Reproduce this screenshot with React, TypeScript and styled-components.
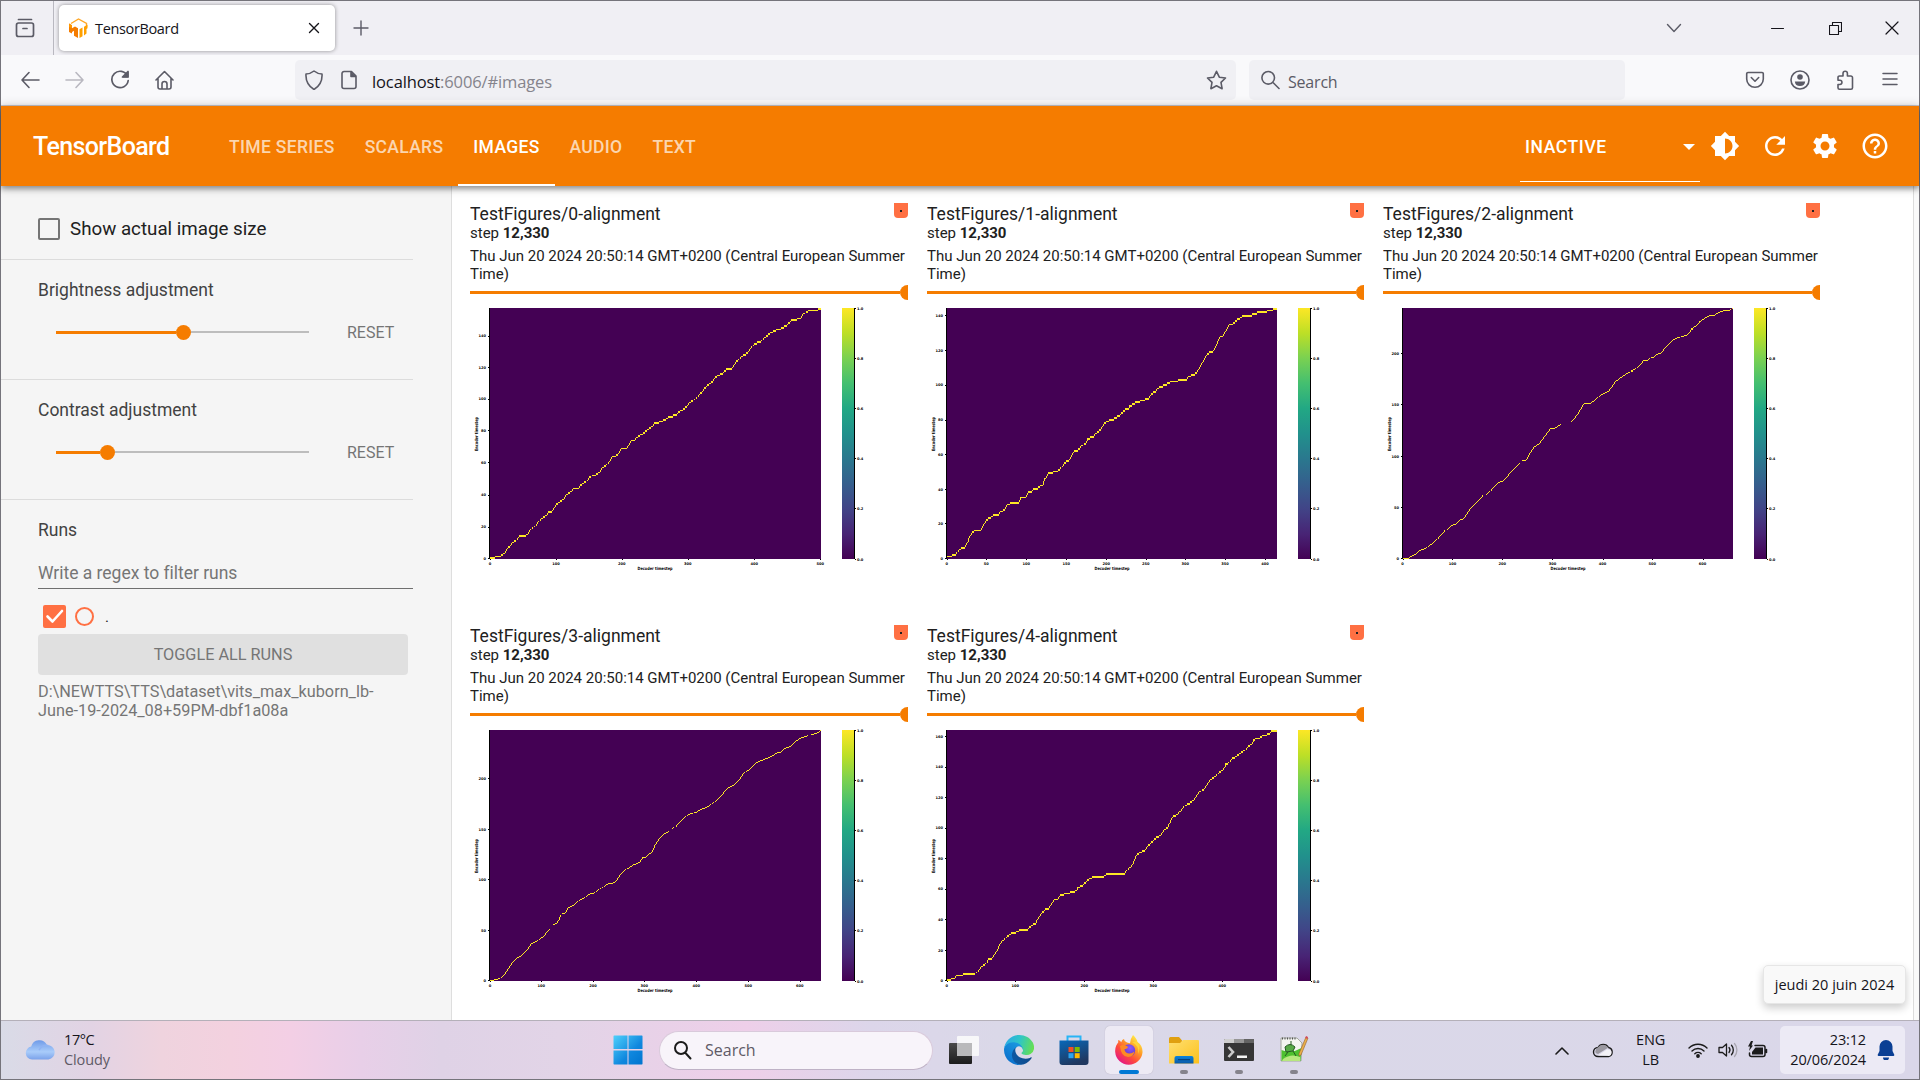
import React from 'react';
import styled, { createGlobalStyle } from 'styled-components';
import { MdBrightness6, MdHelpOutline, MdRefresh, MdSettings } from 'react-icons/md';

const ORANGE = '#f57c00';
const SYSTEM = '"Open Sans", "Noto Sans", sans-serif';

const GlobalStyle = createGlobalStyle`
  * { box-sizing: border-box; }
  body { margin: 0; background: #fff; overflow: hidden; font-family: Roboto, "Liberation Sans", sans-serif; }
  svg { display: block; flex: none; }
`;

const Window = styled.div`
  width: 1920px;
  height: 1080px;
  border: 1px solid #75747b;
  display: flex;
  flex-direction: column;
`;

/* ---------- browser chrome ---------- */

const TabStrip = styled.div`
  height: 54px;
  background: #f0eff4;
  display: flex;
  align-items: center;
  color: #5b5b66;
`;
const FirefoxView = styled.div`
  width: 53px;
  height: 54px;
  border-right: 1px solid #b9b8c0;
  display: flex;
  align-items: center;
  padding-left: 14px;
`;
const Tab = styled.div`
  margin-left: 5px;
  width: 276px;
  height: 46px;
  background: #fff;
  border-radius: 5px;
  box-shadow: 0 0 4px rgba(0, 0, 0, 0.4);
  display: flex;
  align-items: center;
  padding: 0 15px 0 10px;
`;
const SystemText = styled.span<{ $size: number; $spacing?: number; $color?: string }>`
  font-family: ${SYSTEM};
  font-size: ${p => p.$size}px;
  letter-spacing: ${p => p.$spacing ?? 0}px;
  color: ${p => p.$color ?? '#15141a'};
  white-space: nowrap;
  line-height: 20px;
`;
const TabTitle = styled(SystemText)`
  flex: 1;
  margin-left: 7px;
  padding-top: 2px;
`;
const NewTab = styled.div`
  margin-left: 18px;
`;
const WindowButtons = styled.div`
  margin-left: auto;
  display: flex;
  align-items: center;
  padding-right: 20px;
  color: #15141a;
`;
const Spaced = styled.div<{ $gap: number }>`
  margin-left: ${p => p.$gap}px;
`;

const NavBar = styled.div`
  height: 51px;
  background: #f9f9fb;
  border-bottom: 1px solid #c9c8cf;
  display: flex;
  align-items: center;
  color: #5b5b66;
`;
const NavButtons = styled.div`
  width: 294px;
  display: flex;
  gap: 25px;
  padding-left: 19px;
`;
const Field = styled.div<{ $width: number; $pad: number }>`
  width: ${p => p.$width}px;
  height: 40px;
  background: #f0f0f4;
  border-radius: 5px;
  display: flex;
  align-items: center;
  padding: 0 ${p => p.$pad}px;
`;
const SearchField = styled(Field)`
  margin-left: 13px;
`;
const Url = styled(SystemText)`
  flex: 1;
  margin-left: 14px;
  padding-top: 4px;
  span { color: #85848c; }
`;
const SearchHint = styled(SystemText)`
  margin-left: 8px;
  padding-top: 4px;
`;
const NavTools = styled.div`
  margin-left: auto;
  display: flex;
  align-items: center;
  gap: 25px;
  padding-right: 19px;
`;

/* ---------- TensorBoard header ---------- */

const Header = styled.header`
  height: 80px;
  background: ${ORANGE};
  display: flex;
  color: #fff;
  position: relative;
  z-index: 1;
  box-shadow: 0 3px 5px rgba(0, 0, 0, 0.3), 0 1px 10px rgba(0, 0, 0, 0.25);
`;
const Brand = styled.div`
  width: 213px;
  padding-left: 32px;
  font-size: 25px;
  line-height: 82px;
  font-weight: 500;
  letter-spacing: -0.63px;
`;
const HeaderTab = styled.div<{ $active?: boolean }>`
  padding: 0 15px;
  font-size: 17.5px;
  font-weight: 500;
  letter-spacing: 0.32px;
  line-height: 83px;
  height: 80px;
  color: ${p => (p.$active ? '#fff' : 'rgba(255,255,255,0.7)')};
  box-shadow: ${p => (p.$active ? 'inset 0 -2px #fff' : 'none')};
`;
const HeaderTools = styled.div`
  margin-left: auto;
  display: flex;
  align-items: center;
  padding-right: 29px;
`;
const PluginSelect = styled.div`
  width: 180px;
  height: 76px;
  border-bottom: 1px solid #fff;
  align-self: flex-start;
  display: flex;
  align-items: center;
  justify-content: space-between;
  padding: 6px 5px 0;
  font-size: 17.5px;
  font-weight: 500;
  letter-spacing: 0.6px;
`;
const Caret = styled.span`
  border: 6px solid transparent;
  border-top-color: #fff;
  border-bottom: 0;
`;
const HeaderIcons = styled.div`
  margin-left: 10px;
  display: flex;
  gap: 20px;
`;

/* ---------- sidebar ---------- */

const Body = styled.div`
  height: 834px;
  display: flex;
  background: #fff;
`;
const Sidebar = styled.aside`
  width: 451px;
  background: #f5f5f5;
  border-right: 1px solid #dedede;
`;
const Section = styled.section<{ $height: number }>`
  width: 412px;
  height: ${p => p.$height}px;
  border-bottom: 1px solid #dcdcdc;
  padding-left: 37px;
`;
const CheckRow = styled.div`
  display: flex;
  align-items: center;
  padding-top: 31px;
  font-size: 18.75px;
  line-height: 24px;
  color: #212121;
`;
const EmptyBox = styled.span`
  width: 22px;
  height: 22px;
  border: 2px solid #757575;
  border-radius: 2px;
  margin-right: 10px;
`;
const SectionTitle = styled.h3`
  margin: 0;
  padding-top: 18px;
  font-size: 17.5px;
  font-weight: 400;
  line-height: 24px;
  color: #424242;
`;
const SliderRow = styled.div`
  display: flex;
  align-items: center;
  height: 20px;
  margin-top: 20px;
  padding-left: 18px;
`;
const Track = styled.div`
  width: 253px;
  height: 15px;
  display: flex;
  align-items: center;
`;
const TrackFill = styled.div<{ $width: number }>`
  width: ${p => p.$width}px;
  height: 3px;
  background: ${ORANGE};
`;
const Knob = styled.div`
  width: 15px;
  height: 15px;
  border-radius: 50%;
  background: ${ORANGE};
`;
const TrackRest = styled.div`
  flex: 1;
  height: 2px;
  background: #bdbdbd;
`;
const Reset = styled.span`
  margin-left: 38px;
  font-size: 16px;
  color: #757575;
`;
const Runs = styled.section`
  width: 412px;
  padding-left: 37px;
`;
const RegexInput = styled.div`
  height: 47px;
  border-bottom: 1px solid #6f6f6f;
  padding-top: 19px;
  font-size: 17.5px;
  line-height: 24px;
  color: #757575;
  letter-spacing: -0.02px;
`;
const RunRow = styled.div`
  display: flex;
  align-items: center;
  padding: 16px 0 6px 5px;
  height: 45px;
  font-size: 15px;
  color: #212121;
`;
const RunBox = styled.span`
  width: 23px;
  height: 23px;
  border-radius: 2px;
  background: #ff7043;
`;
const RunCircle = styled.span`
  width: 19px;
  height: 19px;
  border: 2px solid #ff7043;
  border-radius: 50%;
  margin: 0 11px 0 9px;
`;
const ToggleButton = styled.button`
  width: 370px;
  height: 41px;
  border: 0;
  border-radius: 4px;
  background: #e0e0e0;
  color: #757575;
  font: 400 16.25px Roboto, sans-serif;
  display: block;
`;
const LogDir = styled.div`
  margin-top: 7px;
  font-size: 16.25px;
  line-height: 19px;
  color: #757575;
`;

/* ---------- image cards ---------- */

const Main = styled.main`
  flex: 1;
  padding: 17px 0 0 18px;
  display: grid;
  grid-template-columns: 438px 437px 437px;
  grid-auto-rows: 422px;
  column-gap: 19px;
  align-content: start;
`;
const Gutter = styled.div`
  width: 6px;
  border-left: 1px solid #dcdcdc;
  background: #fafafa;
`;
const Card = styled.article`
  overflow: hidden;
  color: #212121;
`;
const CardHead = styled.div`
  display: flex;
  justify-content: space-between;
  height: 21px;
`;
const CardTitle = styled.div`
  font-size: 17.5px;
  line-height: 22px;
`;
const RunBadge = styled.div`
  width: 14px;
  height: 15px;
  background: #ff7043;
  border-radius: 0 0 4px 4px;
  display: flex;
  align-items: center;
  justify-content: center;
`;
const BadgeDot = styled.span`
  width: 2px;
  height: 2px;
  background: #212121;
`;
const Step = styled.div`
  font-size: 15px;
  line-height: 18px;
`;
const WallTime = styled.div`
  margin-top: 5px;
  font-size: 15px;
  line-height: 18px;
  white-space: nowrap;
`;
const StepSlider = styled.div`
  height: 15px;
  margin-top: 2px;
  display: flex;
  align-items: center;
`;
const StepLine = styled.div`
  flex: 1;
  height: 3px;
  background: ${ORANGE};
`;
const StepKnob = styled(Knob)`
  margin-right: -7px;
`;

interface Figure {
  index: number;
  right: number;
  rows: number;
  xOrigin: number;
  xScale: number;
  yShift: number;
  xTicks: number[];
  xStep: number;
  yTicks: number[];
  yStep: number;
  curves: string[];
}

const figures: Figure[] = [
  {
    index: 0, right: 351, rows: 158, xOrigin: 10, xScale: 3, yShift: 110,
    xTicks: [90, 288, 485, 683, 883, 1081], xStep: 100,
    yTicks: [1105, 1010, 914, 817, 721, 626, 531, 437], yStep: 20,
    curves: ['90,1106 100,1103 118,1100 124,1096 132,1090 140,1080 148,1070 158,1058 172,1048 178,1039 196,1036 204,1031 214,1017 230,1004 242,988 256,978 266,967 278,963 290,942 306,932 318,917 330,908 340,895 356,893 366,883 380,873 392,860 412,853 430,832 446,818 458,799 470,797 484,775 500,774 514,753 522,751 538,737 554,727 570,715 584,700 598,697 614,690 628,680 646,677 656,667 674,656 688,640 706,626 716,618 730,600 744,584 756,576 772,557 786,552 800,537 816,535 830,514 848,498 862,490 876,470 884,461 900,456 926,433 944,422 960,417 980,407 994,392 1020,385 1028,373 1046,363 1074,359 1083,354'],
  },
  {
    index: 1, right: 350, rows: 145, xOrigin: 7, xScale: 3, yShift: 110,
    xTicks: [80, 199, 319, 439, 559, 677, 796, 915, 1035], xStep: 50,
    yTicks: [1105, 1000, 897, 793, 689, 584, 480, 376], yStep: 20,
    curves: ['80,1101 94,1100 98,1095 106,1094 116,1082 126,1074 134,1072 144,1052 152,1034 164,1021 182,1020 190,1004 204,986 216,981 222,974 236,973 242,965 252,960 260,947 272,940 296,937 302,922 318,920 326,906 336,905 340,897 354,894 368,884 372,869 380,860 384,849 402,847 418,840 434,820 446,811 462,783 474,781 484,768 496,761 504,745 520,740 530,728 542,718 550,704 564,692 576,690 586,684 598,677 604,668 616,660 626,655 630,646 642,643 652,635 668,634 674,629 684,628 694,612 708,604 718,590 734,587 744,580 760,573 790,571 800,568 808,558 818,555 828,549 840,530 848,518 858,500 868,486 878,485 890,462 898,444 910,437 922,412 932,402 944,400 948,392 962,384 966,380 994,379 1000,371 1010,370 1014,366 1046,364 1050,360 1071,358'],
  },
  {
    index: 2, right: 350, rows: 245, xOrigin: 13, xScale: 2.851, yShift: 110,
    xTicks: [93, 235, 377, 520, 663, 805, 948], xStep: 100,
    yTicks: [1105, 952, 798, 643, 490], yStep: 50,
    curves: [
      '93,1105 110,1104 122,1097 132,1092 142,1080 156,1076 172,1064 184,1054 196,1042 212,1024 215,1023',
      '219,1020 222,1019 230,1008 244,1003 258,990 268,986 276,970 288,952 302,938 318,920 322,919',
      '331,916 333,915 350,897 366,878 376,875 388,865 398,848 410,838 426,820',
      '434,811 444,810 452,796 466,774 482,762 498,738 514,716 528,714 544,702',
      '574,694 576,692 590,674 600,660 608,643 628,642 642,630 660,614 680,604 698,576 712,564 736,547 750,542 766,531 780,512 792,511 798,505 810,502 818,493 830,489 844,470 860,452 876,443 904,434 916,418 928,410 940,396 964,379 982,376 990,370 1006,363 1024,361 1034,355',
    ],
  },
  {
    index: 3, right: 351, rows: 249, xOrigin: 10, xScale: 3, yShift: 112,
    xTicks: [90, 244, 399, 553, 709, 865, 1019], xStep: 100,
    yTicks: [1111, 960, 808, 657, 505], yStep: 50,
    curves: [
      '90,1111 102,1110 118,1106 128,1100 140,1082 158,1056 172,1043 184,1036 196,1025 214,1000 230,993 248,980 268,957',
      '280,943 290,938 302,918',
      '306,912 316,911 322,897 344,885 352,876 382,859 388,853 400,852 418,838 430,832 440,823 456,822 466,815 480,796 496,778 506,776 516,767 538,758 548,742 558,741 574,727 584,706 598,685 612,672 628,664',
      '636,654 642,653',
      '648,648 652,643 662,632 674,620 690,611 710,605 720,598 740,591 766,573 790,550 804,535 824,525 836,512 850,491 868,480 888,459 912,449 930,442 954,428 962,427 970,418 992,409 1008,393 1024,384 1042,378',
      '1052,375 1072,369 1083,361',
    ],
  },
  {
    index: 4, right: 350, rows: 165, xOrigin: 7, xScale: 3, yShift: 112,
    xTicks: [80, 286, 493, 700, 907], xStep: 100,
    yTicks: [1111, 1020, 928, 836, 745, 653, 562, 470, 379], yStep: 20,
    curves: ['80,1111 90,1110 94,1106 104,1104 110,1098 128,1096 132,1093 164,1092 176,1083 184,1070 198,1061 206,1047 216,1045 226,1028 232,1020 240,1002 248,992 258,984 270,973 280,968 294,966 300,960 322,959 334,947 346,941 354,925 362,912 378,897 388,893 396,880 404,868 414,867 420,858 434,852 450,849 456,845 468,843 474,831 488,829 494,820 502,809 516,803 524,799 556,798 562,790 614,789 624,778 634,770 644,748 652,732 662,726 672,724 680,712 692,699 704,688 710,681 720,679 732,660 742,655 750,635 758,620 768,616 780,604 796,585 810,580 824,568 834,550 848,540 858,532 866,514 880,504 896,489 908,480 916,465 924,461 936,447 954,436 964,426 976,420 984,408 994,404 1002,388 1018,384 1026,378 1048,372 1056,361 1071,361'],
  },
];

const PLOT_TOP = 8;
const PLOT_BOTTOM = 259;

/* Quantises a curve to encoder rows: each row becomes one horizontal run of pixels. */
function alignmentPath(f: Figure): string {
  const cell = (PLOT_BOTTOM - PLOT_TOP) / f.rows;
  let d = '';
  for (const curve of f.curves) {
    const pts = curve.split(' ').map(p => {
      const [x, y] = p.split(',').map(Number);
      return [x / f.xScale - f.xOrigin, y / 3 - f.yShift];
    });
    const runs = new Map<number, [number, number]>();
    for (let i = 1; i < pts.length; i++) {
      const [x0, y0] = pts[i - 1];
      const [x1, y1] = pts[i];
      for (let s = 0; s <= 40; s++) {
        const x = x0 + ((x1 - x0) * s) / 40;
        const y = y0 + ((y1 - y0) * s) / 40;
        const row = Math.min(f.rows - 1, Math.max(0, Math.floor((y - PLOT_TOP) / cell)));
        const run = runs.get(row);
        if (run) run[1] = Math.max(run[1], x);
        else runs.set(row, [x, x]);
      }
    }
    runs.forEach(([a, b], row) => {
      const top = Math.round(PLOT_TOP + row * cell);
      const bottom = Math.max(top + 1, Math.round(PLOT_TOP + (row + 1) * cell));
      const left = Math.round(a);
      const right = Math.min(f.right, Math.max(left + 1, Math.round(b)));
      d += `M${left} ${top}H${right}V${bottom}H${left}Z`;
    });
  }
  return d;
}

const viridis = ['#440154', '#482475', '#414487', '#355f8d', '#2a788e', '#21918c', '#22a884', '#44bf70', '#7ad151', '#bddf26', '#fde725'];

function AlignmentPlot({ figure: f }: { figure: Figure }) {
  const bar = f.right + 21;
  return (
    <svg width="438" height="275" viewBox="0 0 438 275" fontFamily="DejaVu Sans, sans-serif" fontSize="4.4" fontWeight="700" fill="#000">
      <defs>
        <linearGradient id={`viridis${f.index}`} x1="0" y1="1" x2="0" y2="0">
          {viridis.map((c, i) => <stop key={c} offset={i / 10} stopColor={c} />)}
        </linearGradient>
      </defs>
      <g shapeRendering="crispEdges">
        <rect x="19" y={PLOT_TOP} width={f.right - 19} height={PLOT_BOTTOM - PLOT_TOP} fill="#440154" />
        <path d={alignmentPath(f)} fill="#fde725" />
        <rect x="19" y={PLOT_TOP} width="1" height={PLOT_BOTTOM - PLOT_TOP} fill="#000" />
        <rect x={bar} y={PLOT_TOP} width="12" height={PLOT_BOTTOM - PLOT_TOP} fill={`url(#viridis${f.index})`} />
        <rect x={bar + 12} y={PLOT_TOP} width="1" height={PLOT_BOTTOM - PLOT_TOP} fill="#000" />
      </g>
      {f.xTicks.map((t, i) => {
        const x = t / f.xScale - f.xOrigin;
        return (
          <g key={t}>
            <rect x={Math.round(x)} y={PLOT_BOTTOM} width="1" height="1" />
            <text x={x} y="265" textAnchor="middle" fontSize="3.6">{i * f.xStep}</text>
          </g>
        );
      })}
      {f.yTicks.map((t, i) => {
        const y = t / 3 - f.yShift;
        return (
          <g key={t}>
            <rect x="18" y={Math.round(y)} width="1" height="1" />
            <text x="16" y={y + 1.5} textAnchor="end" fontSize="3.6">{i * f.yStep}</text>
          </g>
        );
      })}
      {['1.0', '0.8', '0.6', '0.4', '0.2', '0.0'].map((l, i) => (
        <g key={l}>
          <rect x={bar + 13} y={Math.round(PLOT_TOP + i * 50.1)} width="1" height="1" />
          <text x={bar + 15} y={PLOT_TOP + 1.5 + i * 50.2} fontSize="3.6">{l}</text>
        </g>
      ))}
      <text x="185" y="270" textAnchor="middle" textLength="35" lengthAdjust="spacingAndGlyphs">Decoder timestep</text>
      <text transform="translate(7.5 134) rotate(-90)" textAnchor="middle" textLength="34" lengthAdjust="spacingAndGlyphs">Encoder timestep</text>
    </svg>
  );
}

function ImageCard({ figure }: { figure: Figure }) {
  return (
    <Card>
      <CardHead>
        <CardTitle>TestFigures/{figure.index}-alignment</CardTitle>
        <RunBadge><BadgeDot /></RunBadge>
      </CardHead>
      <Step>step <b>12,330</b></Step>
      <WallTime>Thu Jun 20 2024 20:50:14 GMT+0200 (Central European Summer<br />Time)</WallTime>
      <StepSlider><StepLine /><StepKnob /></StepSlider>
      <AlignmentPlot figure={figure} />
    </Card>
  );
}

function Slider({ fill }: { fill: number }) {
  return (
    <SliderRow>
      <Track><TrackFill $width={fill} /><Knob /><TrackRest /></Track>
      <Reset>RESET</Reset>
    </SliderRow>
  );
}

/* ---------- taskbar ---------- */

const Taskbar = styled.footer`
  height: 59px;
  border-top: 1px solid #b4b0b9;
  display: flex;
  align-items: center;
  position: relative;
  background: linear-gradient(90deg, #d9dbe7 0, #e2d3e4 90px, #efd3de 160px, #f3d1df 230px, #f3cfe5 290px,
    #e8cfe8 360px, #dfd2e6 440px, #e2d4e7 560px, #eecfe9 745px, #dcd6ea 870px, #dad8e8 1000px, #dad7e9 1918px);
`;
const Weather = styled.div`
  width: 612px;
  display: flex;
  align-items: center;
  gap: 8px;
  padding-left: 24px;
`;
const Stack = styled.div<{ $align?: string }>`
  display: flex;
  flex-direction: column;
  align-items: ${p => p.$align ?? 'flex-start'};
`;
const TaskSearch = styled.div`
  margin-left: 16px;
  width: 274px;
  height: 39px;
  border-radius: 20px;
  background: #f8f4fa;
  border: 1px solid #d9cadb;
  border-bottom-color: #bfb2c6;
  display: flex;
  align-items: center;
  gap: 13px;
  padding-left: 13px;
`;
const Apps = styled.div`
  display: flex;
  margin-left: 7px;
  gap: 7px;
`;
const AppTile = styled.div<{ $active?: boolean; $running?: boolean }>`
  width: 48px;
  height: 48px;
  border-radius: 5px;
  background: ${p => (p.$active ? '#edeaf4' : 'transparent')};
  box-shadow: ${p => (p.$active ? '0 0 1px #aaa4b4' : 'none')};
  display: flex;
  flex-direction: column;
  align-items: center;
  padding-top: 9px;
  gap: 5px;
  &::after {
    content: '';
    display: ${p => (p.$active || p.$running ? 'block' : 'none')};
    width: ${p => (p.$active ? 20 : 8)}px;
    height: 4px;
    border-radius: 2px;
    background: ${p => (p.$active ? '#0078d4' : '#85838c')};
  }
`;
const Tray = styled.div`
  margin-left: auto;
  display: flex;
  align-items: center;
  padding-right: 14px;
`;
const Clock = styled.div`
  margin-left: 12px;
  width: 125px;
  height: 48px;
  border-radius: 5px;
  background: #eceaf5;
  display: flex;
  align-items: center;
  justify-content: flex-end;
  gap: 11px;
  padding-right: 10px;
`;
const Tooltip = styled.div`
  position: absolute;
  right: 13px;
  bottom: 75px;
  width: 143px;
  height: 39px;
  border-radius: 5px;
  border: 1px solid #e6e6e6;
  background: #f9f9f9;
  box-shadow: 0 4px 9px rgba(0, 0, 0, 0.2);
  display: flex;
  align-items: center;
  justify-content: center;
`;

/* ---------- icons ---------- */

interface LineIconProps { d: string; w?: number; h?: number; sw?: number; color?: string; children?: React.ReactNode }
function LineIcon({ d, w = 20, h = 20, sw = 1.6, color = 'currentColor', children }: LineIconProps) {
  return (
    <svg width={w} height={h} viewBox={`0 0 ${w} ${h}`} fill="none" stroke={color} strokeWidth={sw} strokeLinecap="round" strokeLinejoin="round">
      <path d={d} />
      {children}
    </svg>
  );
}

const TensorFlowMark = () => (
  <svg width="19" height="20" viewBox="0 0 19 20">
    <path d="M2 5.5 9.5 1 17.500 5.5V9" fill="none" stroke="#ffa726" strokeWidth="1.4" />
    <path d="M0 5.500l3 1.700v3l3-1.700 3 1.700v9.800l-4-2.300v-5l-2 1.200v1.600L0 14z" fill="#f57c00" />
    <path d="M0 5.500l3 1.700v3L0 9z" fill="#ff9800" />
    <path d="M10.500 11.200l3-1.600v8.700l-3 1.700zM15 8.700l3.500-2v3.500l-1 .8v4.500L15 17.400z" fill="#ffa000" />
  </svg>
);

const WeatherCloud = () => (
  <svg width="31" height="20" viewBox="0 0 31 20">
    <defs>
      <linearGradient id="cloud" x1="0" y1="0" x2="0" y2="1">
        <stop offset="0" stopColor="#6f9be8" /><stop offset=".6" stopColor="#a9ccfa" /><stop offset="1" stopColor="#7ba2ea" />
      </linearGradient>
    </defs>
    <path d="M7 19.500a6.500 6.500 0 0 1-.8-12.900A8.500 8.500 0 0 1 22 5a7.300 7.300 0 0 1 1.500 14.500z" fill="url(#cloud)" />
    <path d="M14 10q4-6 9-4.500" stroke="#8fb3f3" fill="none" strokeWidth="1.500" />
  </svg>
);

const WindowsLogo = () => (
  <svg width="30" height="30" viewBox="0 0 30 30">
    <defs><linearGradient id="win" x1="0" y1="0" x2="1" y2="1"><stop offset="0" stopColor="#4fd0fb" /><stop offset=".6" stopColor="#0f87de" /><stop offset="1" stopColor="#0074cf" /></linearGradient></defs>
    <path d="M1 .5h13.500V14H.5V1zM15.500.5H29l.5.5v13h-14zM.5 15.500h14v14H1l-.5-.5zM15.500 15.500h14V29l-.5.5H15.500z" fill="url(#win)" />
  </svg>
);

const TaskView = () => (
  <svg width="30" height="30" viewBox="0 0 30 30">
    <defs><linearGradient id="tv" x1="0" y1="0" x2="0" y2="1"><stop offset="0" stopColor="#4a4a4a" /><stop offset="1" stopColor="#1c1c1c" /></linearGradient></defs>
    <rect x="0" y="8" width="23" height="21" rx="1" fill="url(#tv)" />
    <rect x="8" y="1" width="22" height="20" rx="1" fill="#f7f7f9" />
    <rect x="8" y="8" width="15" height="13" fill="#b9b9bb" />
  </svg>
);

const EdgeIcon = () => (
  <svg width="30" height="30" viewBox="0 0 256 256">
    <defs>
      <linearGradient id="e1" x1="0" y1=".6" x2="1" y2=".6"><stop offset="0" stopColor="#0c59a4" /><stop offset="1" stopColor="#114a8b" /></linearGradient>
      <linearGradient id="e2" x1=".8" y1="0" x2=".2" y2="1"><stop offset="0" stopColor="#1b9de2" /><stop offset="1" stopColor="#0a6ccb" /></linearGradient>
      <linearGradient id="e3" x1="0" y1=".3" x2="1" y2=".5"><stop offset="0" stopColor="#2aa8e8" /><stop offset=".5" stopColor="#2fc6c6" /><stop offset="1" stopColor="#66df52" /></linearGradient>
    </defs>
    <path d="M231 190.500c-3.400 1.800-7 3.300-10.600 4.700a101 101 0 0 1-35.900 6.400c-47.300 0-88.500-32.500-88.500-74.300 0-11.400 6.400-21.900 16.500-27.300-42.800 1.800-53.800 46.400-53.800 72.500 0 73.900 68.100 81.400 82.800 81.400 7.900 0 19.800-2.300 27-4.600l1.300-.4a128 128 0 0 0 66.600-52.800c2.400-3.800-1.500-7.600-5.400-5.600z" fill="url(#e1)" />
    <path d="M105.700 241.400a79 79 0 0 1-22.700-21.300 80.700 80.700 0 0 1 29.500-120c3.200-1.500 8.500-4.200 15.600-4.100a32.400 32.400 0 0 1 25.700 13 31.900 31.900 0 0 1 6.300 18.700c0-.2 24.500-79.600-80-79.600C36.200 48.100 0 89.700 0 126.300c-.2 19.300 4 38.500 12 56a128 128 0 0 0 156.400 67.200 75.500 75.500 0 0 1-62.600-8z" fill="url(#e2)" />
    <path d="M152.300 148.900c-.9 1-3.400 2.500-3.400 5.600 0 2.600 1.700 5.200 4.800 7.300 14.500 10.100 41.900 8.800 42 8.800 10.700 0 21.300-2.900 30.600-8.400A61.800 61.800 0 0 0 256.800 109C257 86.500 248.900 71.600 245.500 65 224.600 24.200 179.600 0 130.700 0 59.700 0 1 57.200 0 128.200c.5-36.600 36.800-66.100 80.800-66.100 3.500 0 23.800.3 42.600 10.200 16.600 8.700 25.300 19.200 31.300 29.600 6.300 10.800 7.400 24.500 7.400 30 0 5.400-2.800 13.500-9.800 17z" fill="url(#e3)" />
  </svg>
);

const StoreIcon = () => (
  <svg width="30" height="30" viewBox="0 0 30 30">
    <defs><linearGradient id="st" x1="0" y1="0" x2=".4" y2="1"><stop offset="0" stopColor="#0868b9" /><stop offset="1" stopColor="#203860" /></linearGradient></defs>
    <path d="M8.500 6V1.500h13V6" fill="none" stroke="#28b4f5" strokeWidth="2" />
    <path d="M.5 5.500h29V27a3 3 0 0 1-3 3h-23a3 3 0 0 1-3-3z" fill="url(#st)" />
    <path d="M9.500 12h5v5h-5z" fill="#f25022" /><path d="M15.700 12h5v5h-5z" fill="#7fba00" />
    <path d="M9.500 18.200h5v5h-5z" fill="#2aa4ef" /><path d="M15.700 18.200h5v5h-5z" fill="#ffb900" />
  </svg>
);

const FirefoxIcon = () => (
  <svg width="30" height="30" viewBox="0 0 30 30">
    <defs>
      <linearGradient id="ff1" x1=".85" y1=".1" x2=".2" y2=".95"><stop offset="0" stopColor="#fff04a" /><stop offset=".35" stopColor="#ff9a26" /><stop offset=".65" stopColor="#ff4a3c" /><stop offset="1" stopColor="#e31587" /></linearGradient>
      <radialGradient id="ff2" cx=".6" cy=".3" r=".8"><stop offset="0" stopColor="#9059ff" /><stop offset="1" stopColor="#5433b8" /></radialGradient>
    </defs>
    <path d="M19 0c2 2 4 4 4.500 7 3.500 2 5.300 6 5 10.500A13.700 13.700 0 0 1 1.200 17C.8 12 3 9 4.200 7.500V5q2 .6 3 2.300Q8 4.500 10 4q0 2.500 3 3.600l3 .7Q16.500 3.500 19 0z" fill="url(#ff1)" />
    <circle cx="15" cy="15.500" r="6.200" fill="url(#ff2)" />
    <path d="M6 11q4-2.500 8 .8l-.6 1.500-3 1.200q1 4 5 4 3 0 5-2-1 5.500-6.500 5.500Q7 21.500 6 11z" fill="#ff8a24" />
    <path d="M18 7q8 4 6 12 3-7-1-12z" fill="#ffd53b" />
  </svg>
);

const ExplorerIcon = () => (
  <svg width="30" height="30" viewBox="0 0 30 30">
    <defs>
      <linearGradient id="ex" x1="0" y1="0" x2="1" y2="1"><stop offset="0" stopColor="#ffdf71" /><stop offset="1" stopColor="#fcc11b" /></linearGradient>
      <linearGradient id="ex2" x1="0" y1="0" x2="0" y2="1"><stop offset="0" stopColor="#0a84dc" /><stop offset="1" stopColor="#0c59a5" /></linearGradient>
    </defs>
    <path d="M0 3.500A1.500 1.500 0 0 1 1.500 2H10l3 3.500V8H0z" fill="#e0a010" />
    <path d="M0 8h11l3-3h15a1 1 0 0 1 1 1v22.500H0z" fill="url(#ex)" />
    <path d="M5.500 28.500V23a2 2 0 0 1 2-2h15a2 2 0 0 1 2 2v5.500z" fill="url(#ex2)" />
    <path d="M9 24.700h12" stroke="#06396f" />
  </svg>
);

const TerminalIcon = () => (
  <svg width="30" height="30" viewBox="0 0 30 30">
    <rect x="0" y="4" width="30" height="22" rx="1" fill="#363636" />
    <path d="M0 7V5a1 1 0 0 1 1-1h9v4H0z" fill="#cfcfcf" /><path d="M10 4h10v4H10z" fill="#969696" /><path d="M20 4h9a1 1 0 0 1 1 1v3H20z" fill="#636363" />
    <path d="M4.500 12l4.500 5-4.500 5" fill="none" stroke="#ccc" strokeWidth="2.600" />
    <path d="M13 20.500h10V23H13z" fill="#f5f5f5" />
  </svg>
);

const NotepadIcon = () => (
  <svg width="30" height="30" viewBox="0 0 30 30">
    <path d="M2 3h16l5 5-1 18H2z" fill="#f3f5f0" stroke="#a4a89f" />
    <path d="M2.500 15q10 4 20-2l-1 13h-19z" fill="#4ec02f" />
    <path d="M4 24q8-6 17-2v4H3z" fill="#b7e77e" />
    <path d="M6 12q5-5 10 0l-2 4-7 1zM9 17l-3 4M14 16l3 5M12 10V6" fill="#57aa46" stroke="#245b20" />
    <path d="M3 3.500h15" stroke="#555" strokeDasharray="1 1.500" strokeWidth="2" />
    <path d="M27 2l2 1-7 17-2 1v-2.500z" fill="#eab04a" stroke="#94602b" strokeWidth=".6" /><path d="M27 1l2 1-.7 2-2-1z" fill="#d5485c" />
  </svg>
);

const apps = [
  { icon: TaskView }, { icon: EdgeIcon }, { icon: StoreIcon }, { icon: FirefoxIcon, active: true },
  { icon: ExplorerIcon, running: true }, { icon: TerminalIcon, running: true }, { icon: NotepadIcon, running: true },
];

const headerTabs = ['TIME SERIES', 'SCALARS', 'IMAGES', 'AUDIO', 'TEXT'];

export default function App() {
  return (
    <Window>
      <GlobalStyle />
      <TabStrip>
        <FirefoxView>
          <LineIcon d="M3.500 1.500h13M3.500 5h13a2 2 0 0 1 2 2v9.500a2 2 0 0 1-2 2h-13a2 2 0 0 1-2-2V7a2 2 0 0 1 2-2zM8 10.500h4" sw={1.7} />
        </FirefoxView>
        <Tab>
          <TensorFlowMark />
          <TabTitle $size={14.5} $spacing={-0.35}>TensorBoard</TabTitle>
          <LineIcon w={12} h={12} d="M1.500 1.500l9 9M10.500 1.500l-9 9" sw={1.4} color="#15141a" />
        </Tab>
        <NewTab><LineIcon w={16} h={16} d="M8 1v14M1 8h14" sw={1.4} /></NewTab>
        <WindowButtons>
          <LineIcon w={16} h={10} d="M1.500 1.500 8 8.500l6.500-7" sw={1.400} color="#5b5b66" />
          <Spaced $gap={89}><LineIcon w={13} h={3} d="M.5 1.500h12" sw={1.1} /></Spaced>
          <Spaced $gap={45}><LineIcon w={13} h={13} d="M.5 3.500h9v9h-9zM3.500 3.500v-3h9v9h-3" sw={1.1} /></Spaced>
          <Spaced $gap={43}><LineIcon w={14} h={14} d="M1 1l12 12M13 1 1 13" sw={1.2} /></Spaced>
        </WindowButtons>
      </TabStrip>

      <NavBar>
        <NavButtons>
          <LineIcon d="M9 2.500 2 10l7 7.500M2 10h17" />
          <LineIcon d="M11 2.500 18 10l-7 7.500M18 10H1" color="#b9b8c0" />
          <LineIcon d="M17.500 6A8.200 8.200 0 1 0 18.200 10.500M18 1.500v5.500h-5.500z" sw={1.7}><path d="M18.500 1.500v6h-6z" fill="currentColor" stroke="none" /></LineIcon>
          <LineIcon d="M1 10 9.500 1.500l8.500 8.500M3 8.500v8.500a2 2 0 0 0 2 2h9a2 2 0 0 0 2-2V8.500M7 18.500V14a2.500 2.500 0 0 1 5 0v4.500" />
        </NavButtons>
        <Field $width={941} $pad={9}>
          <LineIcon d="M10 1q3.500 2.800 8 3 .7 10-8 15.500Q1.300 14 2 4q4.500-.2 8-3z" />
          <Spaced $gap={16}>
            <LineIcon w={18} d="M4 1.500h7.500L16 6v10.500a2 2 0 0 1-2 2H4a2 2 0 0 1-2-2v-13a2 2 0 0 1 2-2zM11 2v4.500h4.500"><path d="M11 1.500 16 6.500h-5z" fill="currentColor" stroke="none" /></LineIcon>
          </Spaced>
          <Url $size={16.5} $spacing={-0.12}>localhost<span>:6006/#images</span></Url>
          <LineIcon w={21} d="M10.500 1.300l2.800 5.900 6.200.8-4.500 4.400 1.100 6.300-5.600-3-5.600 3L6 12.400 1.500 8l6.200-.8z" />
        </Field>
        <SearchField $width={376} $pad={12}>
          <LineIcon w={19} d="M13.500 7.800a6.300 6.300 0 1 1-12.600 0 6.300 6.300 0 0 1 12.600 0zM12 12.500l6 6" />
          <SearchHint $size={16} $spacing={-0.2} $color="#5b5b66">Search</SearchHint>
        </SearchField>
        <NavTools>
          <LineIcon d="M3 2.500h14a1.300 1.300 0 0 1 1.300 1.300V9a8.300 8.300 0 0 1-16.600 0V3.800A1.300 1.300 0 0 1 3 2.500zM6.300 7.500l3.700 3.700 3.700-3.700" />
          <LineIcon d="M10 1a9 9 0 1 0 0 18 9 9 0 0 0 0-18z">
            <circle cx="10" cy="7" r="2.800" fill="currentColor" stroke="none" />
            <path d="M4.800 11.500h10.400q-.5 4.500-5.200 4.500t-5.200-4.500z" fill="currentColor" stroke="none" />
          </LineIcon>
          <LineIcon d="M8 6V3.500a2.200 2.200 0 0 1 4.400 0V6h3.400a1.700 1.700 0 0 1 1.700 1.700v10a1.500 1.500 0 0 1-1.500 1.500H4.500A1.500 1.500 0 0 1 3 17.700V14.500h1.800a2 2 0 0 0 0-4.300H3V7.500A1.500 1.500 0 0 1 4.500 6z" />
          <LineIcon d="M3 3.500h14M3 9h14M3 14.500h14" sw={1.5} />
        </NavTools>
      </NavBar>

      <Header>
        <Brand>TensorBoard</Brand>
        {headerTabs.map(t => <HeaderTab key={t} $active={t === 'IMAGES'}>{t}</HeaderTab>)}
        <HeaderTools>
          <PluginSelect>INACTIVE<Caret /></PluginSelect>
          <HeaderIcons>
            <MdBrightness6 size={30} /><MdRefresh size={30} /><MdSettings size={30} /><MdHelpOutline size={30} />
          </HeaderIcons>
        </HeaderTools>
      </Header>

      <Body>
        <Sidebar>
          <Section $height={74}><CheckRow><EmptyBox />Show actual image size</CheckRow></Section>
          <Section $height={120}><SectionTitle>Brightness adjustment</SectionTitle><Slider fill={120} /></Section>
          <Section $height={120}><SectionTitle>Contrast adjustment</SectionTitle><Slider fill={44} /></Section>
          <Runs>
            <SectionTitle>Runs</SectionTitle>
            <RegexInput>Write a regex to filter runs</RegexInput>
            <RunRow>
              <RunBox><LineIcon w={23} h={23} d="M4.500 11.500l5 5 9.500-10.500" sw={2.6} color="#fff" /></RunBox>
              <RunCircle />.
            </RunRow>
            <ToggleButton>TOGGLE ALL RUNS</ToggleButton>
            <LogDir>D:\NEWTTS\TTS\dataset\vits_max_kuborn_lb-<br />June-19-2024_08+59PM-dbf1a08a</LogDir>
          </Runs>
        </Sidebar>
        <Main>{figures.map(f => <ImageCard key={f.index} figure={f} />)}</Main>
        <Gutter />
      </Body>

      <Taskbar>
        <Weather>
          <WeatherCloud />
          <Stack>
            <SystemText $size={14.5} $spacing={-0.4}>17°C</SystemText>
            <SystemText $size={14.5} $spacing={-0.1} $color="#5f5a66">Cloudy</SystemText>
          </Stack>
        </Weather>
        <WindowsLogo />
        <TaskSearch>
          <LineIcon w={19} d="M14 8a6 6 0 1 1-12 0 6 6 0 0 1 12 0zM12.500 13l5 5.500" sw={2} color="#1b1b1b" />
          <SystemText $size={16} $color="#5f5a66">Search</SystemText>
        </TaskSearch>
        <Apps>
          {apps.map(({ icon: Icon, active, running }, i) => (
            <AppTile key={i} $active={active} $running={running}><Icon /></AppTile>
          ))}
        </Apps>
        <Tray>
          <LineIcon w={14} h={9} d="M1 8l6-6 6 6" sw={1.6} color="#1b1b1b" />
          <Spaced $gap={23}>
            <LineIcon w={22} h={16} d="M6 14.500a4.500 4.500 0 0 1 0-9 6 6 0 0 1 10.500 0 4.600 4.600 0 0 1 0 9z" sw={1.4} color="#1b1b1b">
              <path d="M5 6q6-6 11.500-.5L6 12q-5-1-1-6z" fill="#9a98a0" stroke="none" />
              <path d="M6 13.500 15 7.500q5 0 4.500 3.500t-4 2.800z" fill="#f3f2f6" stroke="none" />
            </LineIcon>
          </Spaced>
          <Spaced $gap={22}>
            <Stack $align="center">
              <SystemText $size={14.5} $spacing={-0.2}>ENG</SystemText>
              <SystemText $size={14.5} $spacing={-0.2}>LB</SystemText>
            </Stack>
          </Spaced>
          <Spaced $gap={23}>
            <LineIcon w={20} h={16} d="M1 6a12.700 12.700 0 0 1 18 0M4 9a8.500 8.500 0 0 1 12 0M6.800 11.700a4.600 4.600 0 0 1 6.400 0" sw={1.4} color="#1b1b1b">
              <circle cx="10" cy="14" r="1.200" fill="#1b1b1b" />
            </LineIcon>
          </Spaced>
          <Spaced $gap={10}>
            <LineIcon w={20} h={16} d="M1 5.500h3.500L8.500 2v12l-4-3.500H1zM11 5.500a4 4 0 0 1 0 5M13.500 3.300a7 7 0 0 1 0 9.400" sw={1.3} color="#1b1b1b">
              <path d="M16.500 1.500a10 10 0 0 1 0 13" stroke="#a9a6b0" />
            </LineIcon>
          </Spaced>
          <Spaced $gap={9}>
            <LineIcon w={21} h={18} d="M8 4.500h8a2 2 0 0 1 2 2v7a2 2 0 0 1-2 2H4.500a2 2 0 0 1-2-2V12M19.500 8.500v3" sw={1.500} color="#1b1b1b">
              <path d="M8.500 6.500H16v7H5V11z" fill="#1b1b1b" stroke="none" />
              <path d="M4 0 1 5.500h2L2 10l4-5.500H4.500L6 0z" fill="#1b1b1b" stroke="none" />
            </LineIcon>
          </Spaced>
          <Clock>
            <Stack $align="flex-end">
              <SystemText $size={14.5} $spacing={-0.15}>23:12</SystemText>
              <SystemText $size={14.5} $spacing={-0.12}>20/06/2024</SystemText>
            </Stack>
            <svg width="18" height="20" viewBox="0 0 18 20" fill="#0a3f94">
              <path d="M9 0a6.500 6.500 0 0 1 6.500 6.500V11l1.800 3.800q.2 1.200-1 1.200H1.700q-1.200 0-1-1.200L2.500 11V6.500A6.500 6.500 0 0 1 9 0zM6 17.500h6A3 3 0 0 1 6 17.500z" />
            </svg>
          </Clock>
        </Tray>
        <Tooltip><SystemText $size={14.5} $spacing={0}>jeudi 20 juin 2024</SystemText></Tooltip>
      </Taskbar>
    </Window>
  );
}
